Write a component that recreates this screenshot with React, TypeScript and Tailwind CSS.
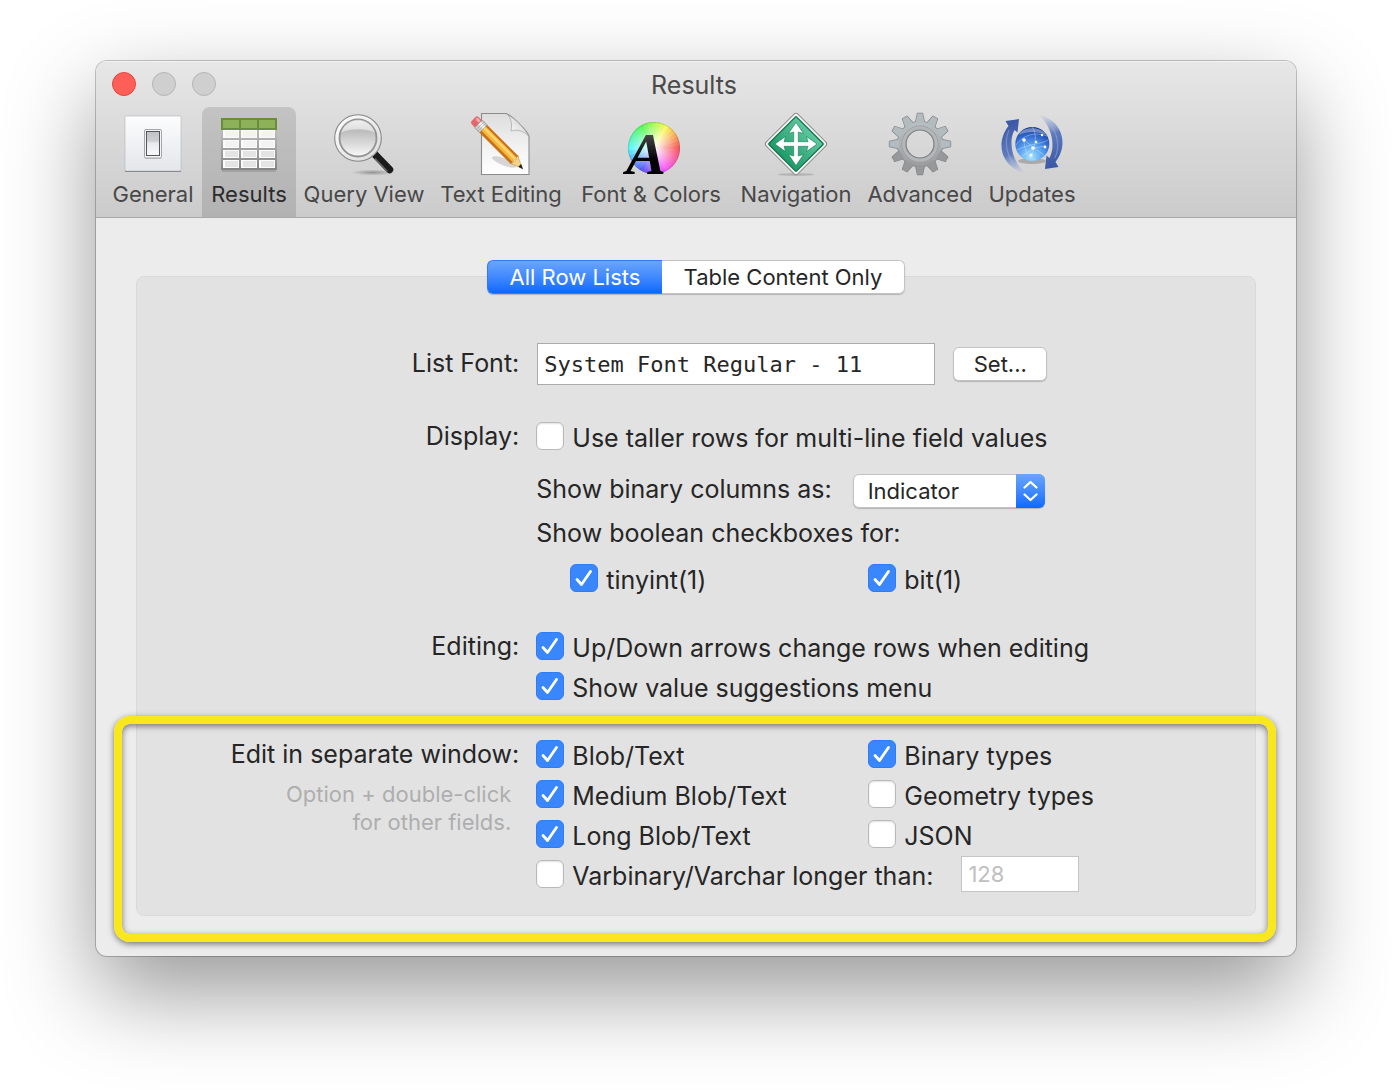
import { useId, useState, type ReactNode } from 'react';

interface ToolbarItem {
    label: string;
    width: string;
    icon: ReactNode;
}

const HUES = Array.from({ length: 36 }, (_, i) => i * 10);
const TEETH = Array.from({ length: 12 }, (_, i) => i * 30);

function IconFrame({ children }: { children: ReactNode }) {
    return (
        <svg viewBox="0 0 64 64" className="size-16 shrink-0 overflow-visible" aria-hidden="true">
            {children}
        </svg>
    );
}

function SwitchIcon() {
    return (
        <IconFrame>
            <defs>
                <linearGradient id="plate" x1="0" y1="0" x2="0" y2="1">
                    <stop offset="0" stopColor="#fdfdfe" />
                    <stop offset="1" stopColor="#e3e6ea" />
                </linearGradient>
                <linearGradient id="rocker" x1="0" y1="0" x2="0" y2="1">
                    <stop offset="0" stopColor="#c0c2c5" />
                    <stop offset="0.4" stopColor="#cccfd3" />
                    <stop offset="0.48" stopColor="#e6e9ee" />
                    <stop offset="1" stopColor="#f7f9fc" />
                </linearGradient>
            </defs>
            <rect x="4" y="5" width="56" height="55" rx="1" fill="#77797c" />
            <rect x="4" y="4" width="56" height="55" rx="1" fill="url(#plate)" stroke="#b4b6b9" strokeWidth="0.6" />
            <rect x="23.5" y="18" width="17" height="29" rx="1.5" fill="#000" opacity="0.12" />
            <rect x="23.5" y="17.5" width="17" height="28.5" rx="1.5" fill="#f4f5f6" stroke="#9b9c9e" strokeWidth="0.9" />
            <rect x="25.5" y="19.5" width="13" height="24" fill="url(#rocker)" stroke="#555" strokeWidth="1" />
        </IconFrame>
    );
}

function TableIcon() {
    return (
        <IconFrame>
            <defs>
                <linearGradient id="rules" x1="0" y1="0" x2="0" y2="1">
                    <stop offset="0" stopColor="#bdbdbd" />
                    <stop offset="1" stopColor="#848484" />
                </linearGradient>
            </defs>
            <rect x="5" y="8" width="54" height="52" fill="#000" opacity="0.12" />
            <rect x="4" y="17" width="56" height="41" fill="url(#rules)" />
            {[18, 28, 38, 48].map((y) =>
                [6, 24, 42].map((x) => (
                    <g key={`${x}-${y}`}>
                        <rect x={x} y={y} width="16" height="8" fill="#fbfbfb" />
                        <rect x={x + 2} y={y + 1} width="13" height="6" fill={y > 30 ? '#e4e4e4' : '#f3f3f3'} />
                    </g>
                )),
            )}
            <rect x="4" y="6" width="56" height="12" fill="#6b8c3c" />
            {[6, 24, 42].map((x) => (
                <rect key={x} x={x} y="8" width="16" height="8" fill="#8cb159" />
            ))}
        </IconFrame>
    );
}

function MagnifierIcon() {
    return (
        <IconFrame>
            <defs>
                <linearGradient id="glass" x1="0" y1="0" x2="0" y2="1">
                    <stop offset="0" stopColor="#e2e2e2" />
                    <stop offset="0.3" stopColor="#bcbcbc" />
                    <stop offset="0.7" stopColor="#dedede" />
                    <stop offset="1" stopColor="#fafafa" />
                </linearGradient>
                <linearGradient id="rim" x1="0" y1="0" x2="1" y2="1">
                    <stop offset="0" stopColor="#ffffff" />
                    <stop offset="1" stopColor="#d9d9d9" />
                </linearGradient>
                <radialGradient id="lensShadow">
                    <stop offset="0" stopColor="#000" stopOpacity="0.3" />
                    <stop offset="1" stopColor="#000" stopOpacity="0" />
                </radialGradient>
            </defs>
            <ellipse cx="41" cy="60.5" rx="22" ry="3" fill="url(#lensShadow)" />
            <path d="M43 42.5L57.5 57.5" stroke="#1c1c1c" strokeWidth="7.5" strokeLinecap="round" />
            <path d="M43.5 47L55 59" stroke="#6b6b6b" strokeWidth="1.2" strokeLinecap="round" />
            <circle cx="26" cy="26" r="23.3" fill="url(#rim)" stroke="#868686" strokeWidth="1.1" />
            <circle cx="26" cy="26" r="18.5" fill="url(#glass)" stroke="#929292" strokeWidth="1.8" />
            <path d="M9 21A17.5 17.5 0 0 1 43 21C36 16 17 16 9 21Z" fill="#fff" opacity="0.5" />
        </IconFrame>
    );
}

function PencilIcon() {
    return (
        <IconFrame>
            <defs>
                <linearGradient id="sheet" x1="0" y1="0" x2="0" y2="1">
                    <stop offset="0" stopColor="#dddddd" />
                    <stop offset="0.6" stopColor="#f4f4f4" />
                    <stop offset="1" stopColor="#ffffff" />
                </linearGradient>
                <linearGradient id="fold" x1="0" y1="1" x2="1" y2="0">
                    <stop offset="0" stopColor="#ffffff" />
                    <stop offset="1" stopColor="#c8c8c8" />
                </linearGradient>
            </defs>
            <path d="M12.5 1.5H37C42 3 58 18 60 24V62.5H12.5Z" fill="url(#sheet)" stroke="#8b8b8b" strokeWidth="1.1" />
            <path d="M39 3C43 8 43 14 42 19C48 17 55 19 59.5 24C56 17 47 7 39 3Z" fill="url(#fold)" stroke="#a5a5a5" strokeWidth="0.7" />
            <ellipse cx="35" cy="50" rx="13" ry="3.5" transform="rotate(22 35 50)" fill="#000" opacity="0.14" />
            <g transform="translate(4.5 7) rotate(45)">
                <rect x="0" y="-5" width="8" height="10" rx="2.5" fill="#e2696d" />
                <rect x="1.5" y="-4" width="5" height="3" rx="1.5" fill="#f6aaa9" />
                <rect x="7" y="-5.5" width="7" height="11" fill="#cfcfcf" stroke="#868686" strokeWidth="0.6" />
                <rect x="7.3" y="-3" width="6.4" height="3.5" fill="#fafafa" />
                <path d="M9.5 -5.5V5.5M11.8 -5.5V5.5" stroke="#999" strokeWidth="0.6" />
                <rect x="14" y="-5.5" width="44" height="11" fill="#c8731b" />
                <rect x="14" y="-3.3" width="44" height="6" fill="#f6b73c" />
                <rect x="14" y="-2.5" width="44" height="2.5" fill="#ffd673" />
                <path d="M57 -5.5C60 -5 60 -3 58 -2C60 0 60 1 58 2.5C60 3.5 59 5 57 5.5L69.5 0.5Z" fill="#f4d48b" stroke="#c98d34" strokeWidth="0.5" />
                <path d="M65.5 -2L70.5 0.5L65.5 2.2Z" fill="#222" />
            </g>
        </IconFrame>
    );
}

function FontColorIcon() {
    return (
        <IconFrame>
            <defs>
                <radialGradient id="wheelGlow">
                    <stop offset="0" stopColor="#fff" stopOpacity="1" />
                    <stop offset="0.55" stopColor="#fff" stopOpacity="0.5" />
                    <stop offset="1" stopColor="#fff" stopOpacity="0.1" />
                </radialGradient>
                <linearGradient id="ink" x1="0" y1="0" x2="0" y2="1">
                    <stop offset="0.2" stopColor="#4a4a4a" />
                    <stop offset="0.6" stopColor="#000" />
                </linearGradient>
            </defs>
            {HUES.map((angle) => (
                <path
                    key={angle}
                    d="M35 36L32.5 10.12A26 26 0 0 1 37.5 10.12Z"
                    transform={`rotate(${angle} 35 36)`}
                    fill={`hsl(${(450 - angle) % 360} 92% 60%)`}
                />
            ))}
            <circle cx="35" cy="36" r="26" fill="url(#wheelGlow)" />
            <circle cx="35" cy="36" r="25.6" fill="none" stroke="#6b6b6b" strokeOpacity="0.35" strokeWidth="0.8" />
            <text x="7" y="61.5" fontFamily="Liberation Serif, serif" fontSize="60" fontStyle="italic" fontWeight="700" fill="url(#ink)">
                A
            </text>
        </IconFrame>
    );
}

function NavigationIcon() {
    return (
        <IconFrame>
            <defs>
                <linearGradient id="sign" x1="0" y1="0" x2="0" y2="1">
                    <stop offset="0" stopColor="#5dc79f" />
                    <stop offset="1" stopColor="#1f9a69" />
                </linearGradient>
            </defs>
            <ellipse cx="32" cy="62.5" rx="18" ry="1.5" fill="#000" opacity="0.14" />
            <rect x="9.5" y="9.5" width="45" height="45" rx="3" transform="rotate(45 32 32)" fill="#f6f6f6" stroke="#8c8c8c" strokeWidth="1" />
            <rect x="12.5" y="12.5" width="39" height="39" rx="1" transform="rotate(45 32 32)" fill="url(#sign)" stroke="#16734f" strokeWidth="1.4" />
            <path
                d="M32 10.5L39.5 21.5L34.3 20V29.7H44L42.5 24.5L53 32L42.5 39.5L44 34.3H34.3V44L39.5 42.5L32 53.5L24.5 42.5L29.7 44V34.3H20L21.5 39.5L11 32L21.5 24.5L20 29.7H29.7V20L24.5 21.5Z"
                fill="#fff"
                stroke="#187a54"
                strokeWidth="0.6"
            />
        </IconFrame>
    );
}

function GearIcon() {
    return (
        <IconFrame>
            <defs>
                <linearGradient id="steel" gradientUnits="userSpaceOnUse" x1="0" y1="0" x2="0" y2="64">
                    <stop offset="0" stopColor="#bcc8ce" />
                    <stop offset="0.5" stopColor="#adafb1" />
                    <stop offset="1" stopColor="#949494" />
                </linearGradient>
                <mask id="hub">
                    <rect width="64" height="64" fill="#fff" />
                    <circle cx="32" cy="32" r="14" fill="#000" />
                </mask>
            </defs>
            <g mask="url(#hub)">
                <g fill="#85898c" stroke="#85898c" strokeWidth="1.4" strokeLinejoin="round">
                    <circle cx="32" cy="32" r="22.5" />
                    {TEETH.map((angle) => (
                        <path key={angle} d="M27.5 11L29.5 1.5H34.5L36.5 11Z" transform={`rotate(${angle} 32 32)`} />
                    ))}
                </g>
                <circle cx="32" cy="32" r="22.5" fill="url(#steel)" />
                {TEETH.map((angle) => (
                    <path
                        key={angle}
                        d="M27.5 11L29.5 1.5H34.5L36.5 11Z"
                        transform={`rotate(${angle} 32 32)`}
                        fill={angle > 90 && angle < 270 ? '#979899' : '#b4bbbf'}
                    />
                ))}
                <circle cx="32" cy="32" r="18.5" fill="#9a9d9f" />
                <circle cx="32" cy="32" r="17.8" fill="#b4b7b9" />
            </g>
            <circle cx="32" cy="32" r="14" fill="none" stroke="#7b7e81" strokeWidth="1.2" />
        </IconFrame>
    );
}

function UpdatesIcon() {
    return (
        <IconFrame>
            <defs>
                <linearGradient id="sweep" gradientUnits="userSpaceOnUse" x1="10" y1="10" x2="22" y2="62">
                    <stop offset="0" stopColor="#3c58a6" />
                    <stop offset="0.6" stopColor="#5f7bbd" />
                    <stop offset="1" stopColor="#a5b6dc" stopOpacity="0.1" />
                </linearGradient>
                <radialGradient id="globe" cx="0.45" cy="0.88" r="0.9">
                    <stop offset="0" stopColor="#a4e4ff" />
                    <stop offset="0.4" stopColor="#5aa2f2" />
                    <stop offset="0.75" stopColor="#2d60c4" />
                    <stop offset="1" stopColor="#1a3482" />
                </radialGradient>
            </defs>
            <g id="arrow">
                <path d="M25 61C3 57 -6 32 8.5 14L5.5 9L19 7L17.5 20.5L14.5 18C8 30 12 49 25 61Z" fill="url(#sweep)" />
                <path d="M9 18C3 32 8 46 16 54" fill="none" stroke="#9fb3de" strokeWidth="1.2" opacity="0.5" />
            </g>
            <use href="#arrow" transform="rotate(180 32 32)" />
            <ellipse cx="32" cy="49" rx="14" ry="3" fill="#000" opacity="0.2" />
            <circle cx="32.3" cy="32" r="17" fill="url(#globe)" />
            <path d="M19 23C22 14 42 14 46 23C38 19 26 19 19 23Z" fill="#fff" opacity="0.35" />
            <g fill="none" stroke="#cfe7ff" strokeWidth="0.7" opacity="0.6">
                <path d="M16 33C24 22 36 20 47 24M17 38C28 32 42 32 48 28M24 28L34 36L45 34M34 36L31 46M34 36C36 28 36 20 32 15M24 28C24 38 28 46 36 48M22 44L34 36L44 43" />
            </g>
            <g fill="#fff">
                <circle cx="24" cy="28" r="1.8" />
                <circle cx="33" cy="36" r="1.8" />
                <circle cx="45" cy="35" r="1.4" />
                <circle cx="31" cy="43" r="1.5" />
                <circle cx="36" cy="30" r="1.3" />
                <circle cx="42" cy="23" r="1.2" />
            </g>
        </IconFrame>
    );
}

const TOOLBAR: ToolbarItem[] = [
    { label: 'General', width: 'w-[98px]', icon: <SwitchIcon /> },
    { label: 'Results', width: 'w-[94px]', icon: <TableIcon /> },
    { label: 'Query View', width: 'w-[136px]', icon: <MagnifierIcon /> },
    { label: 'Text Editing', width: 'w-[138px]', icon: <PencilIcon /> },
    { label: 'Font & Colors', width: 'w-[162px]', icon: <FontColorIcon /> },
    { label: 'Navigation', width: 'w-[128px]', icon: <NavigationIcon /> },
    { label: 'Advanced', width: 'w-[120px]', icon: <GearIcon /> },
    { label: 'Updates', width: 'w-[104px]', icon: <UpdatesIcon /> },
];

function Checkbox({ label, defaultChecked = false }: { label: string; defaultChecked?: boolean }) {
    return (
        <label className="flex h-10 items-center gap-2 whitespace-nowrap">
            <span className="relative size-7 shrink-0">
                <input
                    type="checkbox"
                    defaultChecked={defaultChecked}
                    className="peer block size-7 appearance-none rounded-md border border-[#b9b9b9] bg-white shadow-[inset_0_1px_2px_rgba(0,0,0,0.12)] checked:border-[#2f7df6] checked:bg-[#3a87fd] checked:shadow-none"
                />
                <svg viewBox="0 0 28 28" className="pointer-events-none absolute inset-0 hidden size-7 peer-checked:block" aria-hidden="true">
                    <path d="M7 15.5L11.5 20.5L20.5 7.5" fill="none" stroke="#fff" strokeWidth="2.8" strokeLinecap="round" strokeLinejoin="round" />
                </svg>
            </span>
            <span className="pt-1">{label}</span>
        </label>
    );
}

function Row({ label, htmlFor, className, children }: { label: string; htmlFor?: string; className?: string; children: ReactNode }) {
    return (
        <div className={`grid grid-cols-[5fr_9fr] ${className ?? ''}`}>
            <div className="flex h-10 items-center justify-end pr-[17px]">
                {htmlFor ? <label htmlFor={htmlFor}>{label}</label> : <span>{label}</span>}
            </div>
            <div>{children}</div>
        </div>
    );
}

export default function App() {
    const [pane, setPane] = useState('Results');
    const [tab, setTab] = useState('All Row Lists');
    const id = useId();

    return (
        <div className="min-h-screen bg-white px-24 pt-[61px] pb-[133px] font-[Inter,'Liberation_Sans',sans-serif] text-[25px] leading-8 text-[#262626]">
            <main className="overflow-hidden rounded-[11px] bg-[#ececec] shadow-[0_0_0_1px_rgba(0,0,0,0.22),0_36px_90px_rgba(0,0,0,0.41)]">
                <header className="border-b border-[#a9a9a9] bg-linear-to-b from-[#e7e7e7] to-[#cbcbcb] shadow-[inset_0_1px_0_#f4f4f4]">
                    <div className="grid h-[46px] grid-cols-[1fr_auto_1fr] items-center px-4">
                        <div className="flex gap-4">
                            <button type="button" aria-label="Close" className="size-6 rounded-full border border-[#e2463f] bg-[#ff5f57]" />
                            <button type="button" aria-label="Minimize" className="size-6 rounded-full border border-[#b5b5b5] bg-[#cfcfcf]" />
                            <button type="button" aria-label="Zoom" className="size-6 rounded-full border border-[#b5b5b5] bg-[#cfcfcf]" />
                        </div>
                        <h1 className="pt-px pr-1 text-[#4a4a4a]">Results</h1>
                    </div>
                    <nav className="flex pl-2 text-[22px] leading-7">
                        {TOOLBAR.map((item) => (
                            <button
                                key={item.label}
                                type="button"
                                onClick={() => setPane(item.label)}
                                className={`flex h-[110px] flex-col items-center gap-1 rounded-t-lg pt-[5px] whitespace-nowrap ${item.width} ${
                                    item.label === pane ? 'bg-black/12 text-[#2b2b2b]' : 'text-[#484848]'
                                }`}
                            >
                                {item.icon}
                                <span>{item.label}</span>
                            </button>
                        ))}
                    </nav>
                </header>

                <div className="px-10 pt-[42px] pb-10">
                    {/* Tabs straddle the top edge of the panel */}
                    <div className="relative z-10 mx-auto flex h-[34px] w-[418px] rounded-md text-[22px] shadow-[0_1px_1px_rgba(0,0,0,0.2)]">
                        {['All Row Lists', 'Table Content Only'].map((name) => (
                            <button
                                key={name}
                                type="button"
                                onClick={() => setTab(name)}
                                className={`border whitespace-nowrap first:w-[175px] first:rounded-l-md first:border-r-0 last:flex-1 last:rounded-r-md last:border-l-0 ${
                                    name === tab
                                        ? 'border-[#2f7df6] bg-linear-to-b from-[#69a5fb] to-[#0a68ff] text-white'
                                        : 'border-[#c3c3c3] bg-white'
                                }`}
                            >
                                {name}
                            </button>
                        ))}
                    </div>

                    <section className="-mt-[18px] rounded-lg border border-[#d9d9d9] bg-[#e2e2e2] pt-[66px] pb-[21px]">
                        <Row label="List Font:" htmlFor={`${id}-font`}>
                            <div className="flex items-center gap-[18px] pl-px">
                                <input
                                    id={`${id}-font`}
                                    readOnly
                                    value="System Font Regular - 11"
                                    className="h-[42px] w-[398px] border border-[#ababab] bg-white px-1.5 font-['DejaVu_Sans_Mono',monospace] text-[22px]"
                                />
                                <button
                                    type="button"
                                    className="h-[34px] w-[94px] rounded-md border border-[#c3c3c3] bg-white text-[22px] shadow-[0_1px_1px_rgba(0,0,0,0.2)]"
                                >
                                    Set...
                                </button>
                            </div>
                        </Row>

                        <Row label="Display:" className="mt-[31px]">
                            <Checkbox label="Use taller rows for multi-line field values" />
                            <div className="mt-[15px] flex h-10 items-center gap-[21px]">
                                <label htmlFor={`${id}-binary`} className="pb-1 whitespace-nowrap">
                                    Show binary columns as:
                                </label>
                                <div className="relative">
                                    <select
                                        id={`${id}-binary`}
                                        className="block h-[34px] w-48 appearance-none rounded-md border border-[#c3c3c3] bg-white pl-[14px] text-[22px] leading-7 shadow-[0_1px_1px_rgba(0,0,0,0.2)]"
                                    >
                                        <option>Indicator</option>
                                        <option>Hex</option>
                                    </select>
                                    <span className="pointer-events-none absolute inset-y-0 right-0 w-[29px] rounded-r-md bg-linear-to-b from-[#69a5fb] to-[#0a68ff]">
                                        <svg viewBox="0 0 29 34" className="h-[34px] w-[29px]" aria-hidden="true">
                                            <path d="M8.5 13.5L14.5 8L20.5 13.5M8.5 20.5L14.5 26L20.5 20.5" fill="none" stroke="#fff" strokeWidth="2.3" strokeLinecap="round" strokeLinejoin="round" />
                                        </svg>
                                    </span>
                                </div>
                            </div>
                            <p className="mt-1.5 flex h-8 items-center">Show boolean checkboxes for:</p>
                            <div className="mt-[9px] grid grid-cols-[298px_1fr] pl-[34px]">
                                <Checkbox label="tinyint(1)" defaultChecked />
                                <Checkbox label="bit(1)" defaultChecked />
                            </div>
                        </Row>

                        <Row label="Editing:" className="mt-7">
                            <Checkbox label="Up/Down arrows change rows when editing" defaultChecked />
                            <Checkbox label="Show value suggestions menu" defaultChecked />
                        </Row>

                        <div className="relative mt-7 grid grid-cols-[5fr_9fr]">
                            <div className="pointer-events-none absolute -top-[18px] -right-[21px] -bottom-12 -left-[23px] rounded-2xl border-8 border-[#f9e71e] shadow-[0_2px_6px_rgba(0,0,0,0.5),inset_0_2px_6px_rgba(0,0,0,0.5)]" />
                            <div className="pr-[17px] text-right">
                                <p className="flex h-10 items-center justify-end">Edit in separate window:</p>
                                <p className="pt-1.5 pr-2 text-[22px] leading-7 text-[#aeaeae]">
                                    Option + double-click
                                    <br />
                                    for other fields.
                                </p>
                            </div>
                            <div>
                                <div className="grid grid-cols-[332px_1fr]">
                                    <Checkbox label="Blob/Text" defaultChecked />
                                    <Checkbox label="Binary types" defaultChecked />
                                    <Checkbox label="Medium Blob/Text" defaultChecked />
                                    <Checkbox label="Geometry types" />
                                    <Checkbox label="Long Blob/Text" defaultChecked />
                                    <Checkbox label="JSON" />
                                </div>
                                <div className="flex items-center gap-7">
                                    <Checkbox label="Varbinary/Varchar longer than:" />
                                    <input
                                        aria-label="Varchar length"
                                        placeholder="128"
                                        disabled
                                        className="h-9 w-[118px] border border-[#c4c4c4] bg-white px-1.5 text-[22px] placeholder:text-[#c0c0c0]"
                                    />
                                </div>
                            </div>
                        </div>
                    </section>
                </div>
            </main>
        </div>
    );
}
